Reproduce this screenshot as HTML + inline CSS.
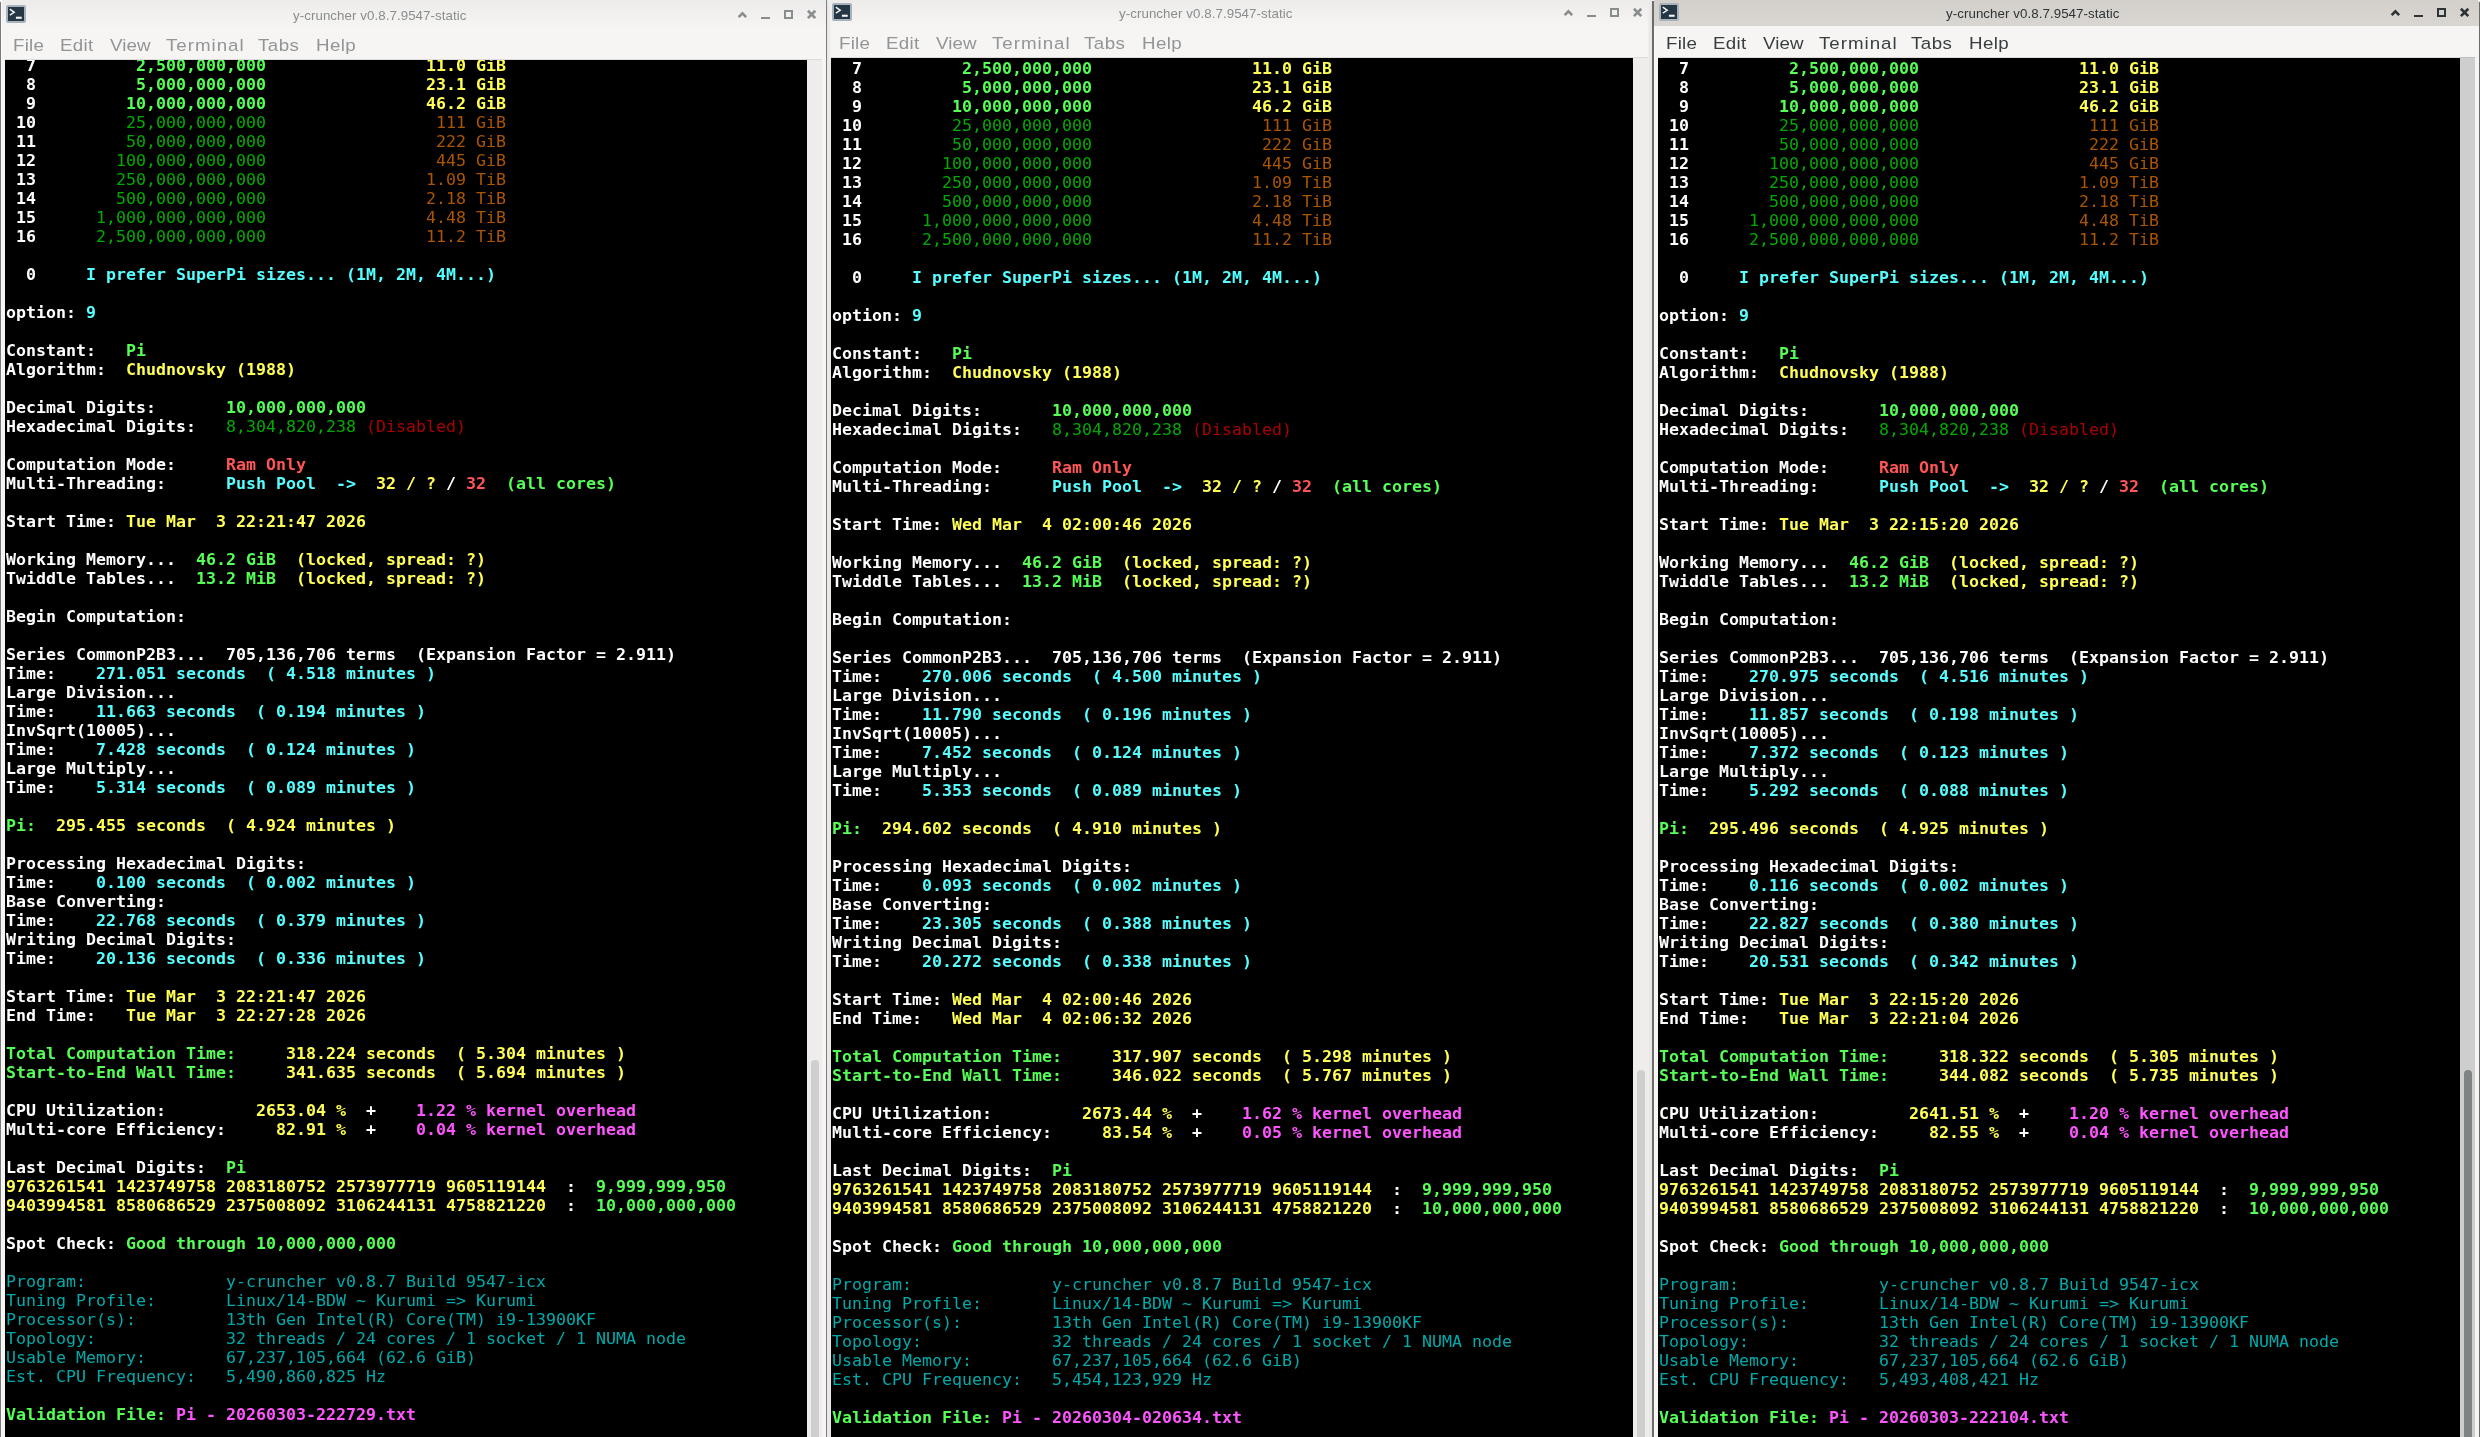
<!DOCTYPE html>
<html><head><meta charset="utf-8"><title>y-cruncher</title>
<style>
html,body{margin:0;padding:0;background:#f6f5f4;}
body{width:2480px;height:1437px;position:relative;overflow:hidden;font-family:"Liberation Sans",sans-serif;}
.win{position:absolute;top:0;height:1437px;background:#f6f5f4;overflow:hidden;}
.tb{position:absolute;left:0;right:0;top:0;}
.inact .tb{background:linear-gradient(#edecea,#f6f5f4);}
.act .tb{background:linear-gradient(#d3cfcb,#d9d6d2);}
.title{position:absolute;will-change:transform;white-space:nowrap;font-size:13.3px;line-height:16px;height:16px;}
.inact .title{color:#8a8d8e;}
.act .title{color:#2e3436;}
.ico{position:absolute;width:16px;height:14px;background:#253744;border:2px solid #a8b2bd;border-radius:2px;}
.ico svg{position:absolute;left:0;top:0;}
.btns{position:absolute;}
.btns svg{position:absolute;left:0;top:0;}
.menu{position:absolute;will-change:transform;left:0;white-space:nowrap;font-size:16.3px;line-height:20px;height:20px;width:400px;}
.menu span{position:absolute;top:0;}
.inact .menu{color:#929596;}
.act .menu{color:#383e40;}
.term{position:absolute;will-change:transform;background:#000;overflow:hidden;bottom:0;font-family:"DejaVu Sans Mono","Liberation Mono",monospace;font-size:16.61px;line-height:19px;}
.r{position:absolute;white-space:pre;height:19px;}
.tl{position:absolute;height:1px;background:#dcdbd9;}
.sb{position:absolute;bottom:0;}
.inact .sb{background:#eeedec;border-top:1px solid #dddbd9;}
.act .sb{background:#cecece;border-top:1px solid #c0bfbd;}
.thumb{position:absolute;bottom:0;border-radius:4px 4px 0 0;}
.inact .thumb{background:#cfcfcf;}
.act .thumb{background:#7f8384;}
.vl{position:absolute;top:0;bottom:0;}
.cr{position:absolute;width:2px;height:2px;background:#fff;}
.kw{color:#fff;font-weight:bold}
.kG{color:#55ff55;font-weight:bold}
.kY{color:#ffff55;font-weight:bold}
.kC{color:#55ffff;font-weight:bold}
.kR{color:#ff5555;font-weight:bold}
.kM{color:#ff55ff;font-weight:bold}
.kg{color:#00aa00}
.ky{color:#aa5500}
.kc{color:#00aaaa}
.kr{color:#aa0000}

</style></head>
<body>
<div class="win inact" id="w0" style="left:0px;width:826px">
<div class="tb" style="height:28px"></div>
<div class="ico" style="left:6px;top:5px"><svg width="16" height="14" viewBox="0 0 16 14"><path d="M1.8 2.2 L6.2 5.3 L1.8 8.1" fill="none" stroke="#eef0f2" stroke-width="1.5"/><rect x="7.9" y="9.7" width="5.8" height="2.1" fill="#f4f5f6"/></svg></div>
<div class="title" style="left:292.6px;top:7.9px;letter-spacing:0.07px">y-cruncher v0.8.7.9547-static</div>
<div class="btns" style="left:730px;top:2px;width:90px;height:26px"><svg width="90" height="26" viewBox="0 0 90 26"><g fill="none" stroke="#8a8d8e" stroke-width="2"><path d="M8.62 15.18 L12.4 11.4 L16.18 15.18" stroke-width="2.6"/><path d="M31 16 L40 16"/><rect x="55" y="9" width="7" height="7"/><path d="M77.9 8.75 L85.3 16.15 M85.3 8.75 L77.9 16.15" stroke-width="2.6"/></g></svg></div>
<div class="menu" style="top:35.4px"><span style="left:12.50px;letter-spacing:0.219px;transform-origin:0 0;transform:scaleX(1.15)">File</span><span style="left:59.50px;letter-spacing:0.300px;transform-origin:0 0;transform:scaleX(1.15)">Edit</span><span style="left:110.02px;letter-spacing:0.112px;transform-origin:0 0;transform:scaleX(1.15)">View</span><span style="left:166.36px;letter-spacing:0.847px;transform-origin:0 0;transform:scaleX(1.15)">Terminal</span><span style="left:258.36px;letter-spacing:0.413px;transform-origin:0 0;transform:scaleX(1.15)">Tabs</span><span style="left:315.60px;letter-spacing:0.370px;transform-origin:0 0;transform:scaleX(1.15)">Help</span></div>
<div class="term" style="left:5px;top:60px;width:802px"><div style="position:absolute;left:1.0px;top:0">
<div class="r" style="top:-4.5px"><span class="kw">  7</span><span class="kG">          2,500,000,000</span><span class="kY">                11.0 GiB</span></div>
<div class="r" style="top:14.5px"><span class="kw">  8</span><span class="kG">          5,000,000,000</span><span class="kY">                23.1 GiB</span></div>
<div class="r" style="top:33.5px"><span class="kw">  9</span><span class="kG">         10,000,000,000</span><span class="kY">                46.2 GiB</span></div>
<div class="r" style="top:52.5px"><span class="kw"> 10</span><span class="kg">         25,000,000,000</span><span class="ky">                 111 GiB</span></div>
<div class="r" style="top:71.5px"><span class="kw"> 11</span><span class="kg">         50,000,000,000</span><span class="ky">                 222 GiB</span></div>
<div class="r" style="top:90.5px"><span class="kw"> 12</span><span class="kg">        100,000,000,000</span><span class="ky">                 445 GiB</span></div>
<div class="r" style="top:109.5px"><span class="kw"> 13</span><span class="kg">        250,000,000,000</span><span class="ky">                1.09 TiB</span></div>
<div class="r" style="top:128.5px"><span class="kw"> 14</span><span class="kg">        500,000,000,000</span><span class="ky">                2.18 TiB</span></div>
<div class="r" style="top:147.5px"><span class="kw"> 15</span><span class="kg">      1,000,000,000,000</span><span class="ky">                4.48 TiB</span></div>
<div class="r" style="top:166.5px"><span class="kw"> 16</span><span class="kg">      2,500,000,000,000</span><span class="ky">                11.2 TiB</span></div>
<div class="r" style="top:204.5px"><span class="kw">  0     </span><span class="kC">I prefer SuperPi sizes... (1M, 2M, 4M...)</span></div>
<div class="r" style="top:242.5px"><span class="kw">option: </span><span class="kC">9</span></div>
<div class="r" style="top:280.5px"><span class="kw">Constant:   </span><span class="kG">Pi</span></div>
<div class="r" style="top:299.5px"><span class="kw">Algorithm:  </span><span class="kY">Chudnovsky (1988)</span></div>
<div class="r" style="top:337.5px"><span class="kw">Decimal Digits:       </span><span class="kG">10,000,000,000</span></div>
<div class="r" style="top:356.5px"><span class="kw">Hexadecimal Digits:   </span><span class="kg">8,304,820,238 </span><span class="kr">(Disabled)</span></div>
<div class="r" style="top:394.5px"><span class="kw">Computation Mode:     </span><span class="kR">Ram Only</span></div>
<div class="r" style="top:413.5px"><span class="kw">Multi-Threading:      </span><span class="kC">Push Pool  -&gt;  </span><span class="kY">32 / ? </span><span class="kw">/ </span><span class="kR">32  </span><span class="kG">(all cores)</span></div>
<div class="r" style="top:451.5px"><span class="kw">Start Time: </span><span class="kY">Tue Mar  3 22:21:47 2026</span></div>
<div class="r" style="top:489.5px"><span class="kw">Working Memory...  </span><span class="kG">46.2 GiB  </span><span class="kY">(locked, spread: ?)</span></div>
<div class="r" style="top:508.5px"><span class="kw">Twiddle Tables...  </span><span class="kG">13.2 MiB  </span><span class="kY">(locked, spread: ?)</span></div>
<div class="r" style="top:546.5px"><span class="kw">Begin Computation:</span></div>
<div class="r" style="top:584.5px"><span class="kw">Series CommonP2B3...  705,136,706 terms  (Expansion Factor = 2.911)</span></div>
<div class="r" style="top:603.5px"><span class="kw">Time:    </span><span class="kC">271.051 seconds  ( 4.518 minutes )</span></div>
<div class="r" style="top:622.5px"><span class="kw">Large Division...</span></div>
<div class="r" style="top:641.5px"><span class="kw">Time:    </span><span class="kC">11.663 seconds  ( 0.194 minutes )</span></div>
<div class="r" style="top:660.5px"><span class="kw">InvSqrt(10005)...</span></div>
<div class="r" style="top:679.5px"><span class="kw">Time:    </span><span class="kC">7.428 seconds  ( 0.124 minutes )</span></div>
<div class="r" style="top:698.5px"><span class="kw">Large Multiply...</span></div>
<div class="r" style="top:717.5px"><span class="kw">Time:    </span><span class="kC">5.314 seconds  ( 0.089 minutes )</span></div>
<div class="r" style="top:755.5px"><span class="kG">Pi:  </span><span class="kY">295.455 seconds  ( 4.924 minutes )</span></div>
<div class="r" style="top:793.5px"><span class="kw">Processing Hexadecimal Digits:</span></div>
<div class="r" style="top:812.5px"><span class="kw">Time:    </span><span class="kC">0.100 seconds  ( 0.002 minutes )</span></div>
<div class="r" style="top:831.5px"><span class="kw">Base Converting:</span></div>
<div class="r" style="top:850.5px"><span class="kw">Time:    </span><span class="kC">22.768 seconds  ( 0.379 minutes )</span></div>
<div class="r" style="top:869.5px"><span class="kw">Writing Decimal Digits:</span></div>
<div class="r" style="top:888.5px"><span class="kw">Time:    </span><span class="kC">20.136 seconds  ( 0.336 minutes )</span></div>
<div class="r" style="top:926.5px"><span class="kw">Start Time: </span><span class="kY">Tue Mar  3 22:21:47 2026</span></div>
<div class="r" style="top:945.5px"><span class="kw">End Time:   </span><span class="kY">Tue Mar  3 22:27:28 2026</span></div>
<div class="r" style="top:983.5px"><span class="kG">Total Computation Time:     </span><span class="kY">318.224 seconds  ( 5.304 minutes )</span></div>
<div class="r" style="top:1002.5px"><span class="kG">Start-to-End Wall Time:     </span><span class="kY">341.635 seconds  ( 5.694 minutes )</span></div>
<div class="r" style="top:1040.5px"><span class="kw">CPU Utilization:         </span><span class="kY">2653.04 %  </span><span class="kw">+    </span><span class="kM">1.22 % kernel overhead</span></div>
<div class="r" style="top:1059.5px"><span class="kw">Multi-core Efficiency:   </span><span class="kY">  82.91 %  </span><span class="kw">+    </span><span class="kM">0.04 % kernel overhead</span></div>
<div class="r" style="top:1097.5px"><span class="kw">Last Decimal Digits:  </span><span class="kG">Pi</span></div>
<div class="r" style="top:1116.5px"><span class="kY">9763261541 1423749758 2083180752 2573977719 9605119144  </span><span class="kw">:  </span><span class="kG">9,999,999,950</span></div>
<div class="r" style="top:1135.5px"><span class="kY">9403994581 8580686529 2375008092 3106244131 4758821220  </span><span class="kw">:  </span><span class="kG">10,000,000,000</span></div>
<div class="r" style="top:1173.5px"><span class="kw">Spot Check: </span><span class="kG">Good through 10,000,000,000</span></div>
<div class="r" style="top:1211.5px"><span class="kc">Program:              y-cruncher v0.8.7 Build 9547-icx</span></div>
<div class="r" style="top:1230.5px"><span class="kc">Tuning Profile:       Linux/14-BDW ~ Kurumi =&gt; Kurumi</span></div>
<div class="r" style="top:1249.5px"><span class="kc">Processor(s):         13th Gen Intel(R) Core(TM) i9-13900KF</span></div>
<div class="r" style="top:1268.5px"><span class="kc">Topology:             32 threads / 24 cores / 1 socket / 1 NUMA node</span></div>
<div class="r" style="top:1287.5px"><span class="kc">Usable Memory:        67,237,105,664 (62.6 GiB)</span></div>
<div class="r" style="top:1306.5px"><span class="kc">Est. CPU Frequency:   5,490,860,825 Hz</span></div>
<div class="r" style="top:1344.5px"><span class="kG">Validation File: </span><span class="kM">Pi - 20260303-222729.txt</span></div>
</div></div>
<div class="tl" style="left:5px;top:59px;width:802px"></div>
<div class="sb" style="left:807px;top:59px;width:15px"></div>
<div class="thumb" style="left:811px;top:1060px;width:8px"></div>
</div>

<div class="win inact" id="w1" style="left:826px;width:827px">
<div class="tb" style="height:26px"></div>
<div class="ico" style="left:6px;top:3px"><svg width="16" height="14" viewBox="0 0 16 14"><path d="M1.8 2.2 L6.2 5.3 L1.8 8.1" fill="none" stroke="#eef0f2" stroke-width="1.5"/><rect x="7.9" y="9.7" width="5.8" height="2.1" fill="#f4f5f6"/></svg></div>
<div class="title" style="left:293.2px;top:5.9px;letter-spacing:0.07px">y-cruncher v0.8.7.9547-static</div>
<div class="btns" style="left:730px;top:0px;width:90px;height:26px"><svg width="90" height="26" viewBox="0 0 90 26"><g fill="none" stroke="#8a8d8e" stroke-width="2"><path d="M8.62 15.18 L12.4 11.4 L16.18 15.18" stroke-width="2.6"/><path d="M31 16 L40 16"/><rect x="55" y="9" width="7" height="7"/><path d="M77.9 8.75 L85.3 16.15 M85.3 8.75 L77.9 16.15" stroke-width="2.6"/></g></svg></div>
<div class="menu" style="top:33.4px"><span style="left:12.50px;letter-spacing:0.219px;transform-origin:0 0;transform:scaleX(1.15)">File</span><span style="left:59.50px;letter-spacing:0.300px;transform-origin:0 0;transform:scaleX(1.15)">Edit</span><span style="left:110.02px;letter-spacing:0.112px;transform-origin:0 0;transform:scaleX(1.15)">View</span><span style="left:166.36px;letter-spacing:0.847px;transform-origin:0 0;transform:scaleX(1.15)">Terminal</span><span style="left:258.36px;letter-spacing:0.413px;transform-origin:0 0;transform:scaleX(1.15)">Tabs</span><span style="left:315.60px;letter-spacing:0.370px;transform-origin:0 0;transform:scaleX(1.15)">Help</span></div>
<div class="term" style="left:5px;top:58px;width:802px"><div style="position:absolute;left:1.0px;top:0">
<div class="r" style="top:0.5px"><span class="kw">  7</span><span class="kG">          2,500,000,000</span><span class="kY">                11.0 GiB</span></div>
<div class="r" style="top:19.5px"><span class="kw">  8</span><span class="kG">          5,000,000,000</span><span class="kY">                23.1 GiB</span></div>
<div class="r" style="top:38.5px"><span class="kw">  9</span><span class="kG">         10,000,000,000</span><span class="kY">                46.2 GiB</span></div>
<div class="r" style="top:57.5px"><span class="kw"> 10</span><span class="kg">         25,000,000,000</span><span class="ky">                 111 GiB</span></div>
<div class="r" style="top:76.5px"><span class="kw"> 11</span><span class="kg">         50,000,000,000</span><span class="ky">                 222 GiB</span></div>
<div class="r" style="top:95.5px"><span class="kw"> 12</span><span class="kg">        100,000,000,000</span><span class="ky">                 445 GiB</span></div>
<div class="r" style="top:114.5px"><span class="kw"> 13</span><span class="kg">        250,000,000,000</span><span class="ky">                1.09 TiB</span></div>
<div class="r" style="top:133.5px"><span class="kw"> 14</span><span class="kg">        500,000,000,000</span><span class="ky">                2.18 TiB</span></div>
<div class="r" style="top:152.5px"><span class="kw"> 15</span><span class="kg">      1,000,000,000,000</span><span class="ky">                4.48 TiB</span></div>
<div class="r" style="top:171.5px"><span class="kw"> 16</span><span class="kg">      2,500,000,000,000</span><span class="ky">                11.2 TiB</span></div>
<div class="r" style="top:209.5px"><span class="kw">  0     </span><span class="kC">I prefer SuperPi sizes... (1M, 2M, 4M...)</span></div>
<div class="r" style="top:247.5px"><span class="kw">option: </span><span class="kC">9</span></div>
<div class="r" style="top:285.5px"><span class="kw">Constant:   </span><span class="kG">Pi</span></div>
<div class="r" style="top:304.5px"><span class="kw">Algorithm:  </span><span class="kY">Chudnovsky (1988)</span></div>
<div class="r" style="top:342.5px"><span class="kw">Decimal Digits:       </span><span class="kG">10,000,000,000</span></div>
<div class="r" style="top:361.5px"><span class="kw">Hexadecimal Digits:   </span><span class="kg">8,304,820,238 </span><span class="kr">(Disabled)</span></div>
<div class="r" style="top:399.5px"><span class="kw">Computation Mode:     </span><span class="kR">Ram Only</span></div>
<div class="r" style="top:418.5px"><span class="kw">Multi-Threading:      </span><span class="kC">Push Pool  -&gt;  </span><span class="kY">32 / ? </span><span class="kw">/ </span><span class="kR">32  </span><span class="kG">(all cores)</span></div>
<div class="r" style="top:456.5px"><span class="kw">Start Time: </span><span class="kY">Wed Mar  4 02:00:46 2026</span></div>
<div class="r" style="top:494.5px"><span class="kw">Working Memory...  </span><span class="kG">46.2 GiB  </span><span class="kY">(locked, spread: ?)</span></div>
<div class="r" style="top:513.5px"><span class="kw">Twiddle Tables...  </span><span class="kG">13.2 MiB  </span><span class="kY">(locked, spread: ?)</span></div>
<div class="r" style="top:551.5px"><span class="kw">Begin Computation:</span></div>
<div class="r" style="top:589.5px"><span class="kw">Series CommonP2B3...  705,136,706 terms  (Expansion Factor = 2.911)</span></div>
<div class="r" style="top:608.5px"><span class="kw">Time:    </span><span class="kC">270.006 seconds  ( 4.500 minutes )</span></div>
<div class="r" style="top:627.5px"><span class="kw">Large Division...</span></div>
<div class="r" style="top:646.5px"><span class="kw">Time:    </span><span class="kC">11.790 seconds  ( 0.196 minutes )</span></div>
<div class="r" style="top:665.5px"><span class="kw">InvSqrt(10005)...</span></div>
<div class="r" style="top:684.5px"><span class="kw">Time:    </span><span class="kC">7.452 seconds  ( 0.124 minutes )</span></div>
<div class="r" style="top:703.5px"><span class="kw">Large Multiply...</span></div>
<div class="r" style="top:722.5px"><span class="kw">Time:    </span><span class="kC">5.353 seconds  ( 0.089 minutes )</span></div>
<div class="r" style="top:760.5px"><span class="kG">Pi:  </span><span class="kY">294.602 seconds  ( 4.910 minutes )</span></div>
<div class="r" style="top:798.5px"><span class="kw">Processing Hexadecimal Digits:</span></div>
<div class="r" style="top:817.5px"><span class="kw">Time:    </span><span class="kC">0.093 seconds  ( 0.002 minutes )</span></div>
<div class="r" style="top:836.5px"><span class="kw">Base Converting:</span></div>
<div class="r" style="top:855.5px"><span class="kw">Time:    </span><span class="kC">23.305 seconds  ( 0.388 minutes )</span></div>
<div class="r" style="top:874.5px"><span class="kw">Writing Decimal Digits:</span></div>
<div class="r" style="top:893.5px"><span class="kw">Time:    </span><span class="kC">20.272 seconds  ( 0.338 minutes )</span></div>
<div class="r" style="top:931.5px"><span class="kw">Start Time: </span><span class="kY">Wed Mar  4 02:00:46 2026</span></div>
<div class="r" style="top:950.5px"><span class="kw">End Time:   </span><span class="kY">Wed Mar  4 02:06:32 2026</span></div>
<div class="r" style="top:988.5px"><span class="kG">Total Computation Time:     </span><span class="kY">317.907 seconds  ( 5.298 minutes )</span></div>
<div class="r" style="top:1007.5px"><span class="kG">Start-to-End Wall Time:     </span><span class="kY">346.022 seconds  ( 5.767 minutes )</span></div>
<div class="r" style="top:1045.5px"><span class="kw">CPU Utilization:         </span><span class="kY">2673.44 %  </span><span class="kw">+    </span><span class="kM">1.62 % kernel overhead</span></div>
<div class="r" style="top:1064.5px"><span class="kw">Multi-core Efficiency:   </span><span class="kY">  83.54 %  </span><span class="kw">+    </span><span class="kM">0.05 % kernel overhead</span></div>
<div class="r" style="top:1102.5px"><span class="kw">Last Decimal Digits:  </span><span class="kG">Pi</span></div>
<div class="r" style="top:1121.5px"><span class="kY">9763261541 1423749758 2083180752 2573977719 9605119144  </span><span class="kw">:  </span><span class="kG">9,999,999,950</span></div>
<div class="r" style="top:1140.5px"><span class="kY">9403994581 8580686529 2375008092 3106244131 4758821220  </span><span class="kw">:  </span><span class="kG">10,000,000,000</span></div>
<div class="r" style="top:1178.5px"><span class="kw">Spot Check: </span><span class="kG">Good through 10,000,000,000</span></div>
<div class="r" style="top:1216.5px"><span class="kc">Program:              y-cruncher v0.8.7 Build 9547-icx</span></div>
<div class="r" style="top:1235.5px"><span class="kc">Tuning Profile:       Linux/14-BDW ~ Kurumi =&gt; Kurumi</span></div>
<div class="r" style="top:1254.5px"><span class="kc">Processor(s):         13th Gen Intel(R) Core(TM) i9-13900KF</span></div>
<div class="r" style="top:1273.5px"><span class="kc">Topology:             32 threads / 24 cores / 1 socket / 1 NUMA node</span></div>
<div class="r" style="top:1292.5px"><span class="kc">Usable Memory:        67,237,105,664 (62.6 GiB)</span></div>
<div class="r" style="top:1311.5px"><span class="kc">Est. CPU Frequency:   5,454,123,929 Hz</span></div>
<div class="r" style="top:1349.5px"><span class="kG">Validation File: </span><span class="kM">Pi - 20260304-020634.txt</span></div>
</div></div>
<div class="tl" style="left:5px;top:57px;width:802px"></div>
<div class="sb" style="left:807px;top:57px;width:15px"></div>
<div class="thumb" style="left:811px;top:1070px;width:8px"></div>
</div>

<div class="win act" id="w2" style="left:1653px;width:827px">
<div class="tb" style="height:26px"></div>
<div class="ico" style="left:6px;top:3px"><svg width="16" height="14" viewBox="0 0 16 14"><path d="M1.8 2.2 L6.2 5.3 L1.8 8.1" fill="none" stroke="#eef0f2" stroke-width="1.5"/><rect x="7.9" y="9.7" width="5.8" height="2.1" fill="#f4f5f6"/></svg></div>
<div class="title" style="left:293.2px;top:5.9px;letter-spacing:0.07px">y-cruncher v0.8.7.9547-static</div>
<div class="btns" style="left:730px;top:0px;width:90px;height:26px"><svg width="90" height="26" viewBox="0 0 90 26"><g fill="none" stroke="#2e3436" stroke-width="2"><path d="M8.62 15.18 L12.4 11.4 L16.18 15.18" stroke-width="2.6"/><path d="M31 16 L40 16"/><rect x="55" y="9" width="7" height="7"/><path d="M77.9 8.75 L85.3 16.15 M85.3 8.75 L77.9 16.15" stroke-width="2.6"/></g></svg></div>
<div class="menu" style="top:33.4px"><span style="left:12.50px;letter-spacing:0.219px;transform-origin:0 0;transform:scaleX(1.15)">File</span><span style="left:59.50px;letter-spacing:0.300px;transform-origin:0 0;transform:scaleX(1.15)">Edit</span><span style="left:110.02px;letter-spacing:0.112px;transform-origin:0 0;transform:scaleX(1.15)">View</span><span style="left:166.36px;letter-spacing:0.847px;transform-origin:0 0;transform:scaleX(1.15)">Terminal</span><span style="left:258.36px;letter-spacing:0.413px;transform-origin:0 0;transform:scaleX(1.15)">Tabs</span><span style="left:315.60px;letter-spacing:0.370px;transform-origin:0 0;transform:scaleX(1.15)">Help</span></div>
<div class="term" style="left:5px;top:58px;width:802px"><div style="position:absolute;left:1.0px;top:0">
<div class="r" style="top:0.5px"><span class="kw">  7</span><span class="kG">          2,500,000,000</span><span class="kY">                11.0 GiB</span></div>
<div class="r" style="top:19.5px"><span class="kw">  8</span><span class="kG">          5,000,000,000</span><span class="kY">                23.1 GiB</span></div>
<div class="r" style="top:38.5px"><span class="kw">  9</span><span class="kG">         10,000,000,000</span><span class="kY">                46.2 GiB</span></div>
<div class="r" style="top:57.5px"><span class="kw"> 10</span><span class="kg">         25,000,000,000</span><span class="ky">                 111 GiB</span></div>
<div class="r" style="top:76.5px"><span class="kw"> 11</span><span class="kg">         50,000,000,000</span><span class="ky">                 222 GiB</span></div>
<div class="r" style="top:95.5px"><span class="kw"> 12</span><span class="kg">        100,000,000,000</span><span class="ky">                 445 GiB</span></div>
<div class="r" style="top:114.5px"><span class="kw"> 13</span><span class="kg">        250,000,000,000</span><span class="ky">                1.09 TiB</span></div>
<div class="r" style="top:133.5px"><span class="kw"> 14</span><span class="kg">        500,000,000,000</span><span class="ky">                2.18 TiB</span></div>
<div class="r" style="top:152.5px"><span class="kw"> 15</span><span class="kg">      1,000,000,000,000</span><span class="ky">                4.48 TiB</span></div>
<div class="r" style="top:171.5px"><span class="kw"> 16</span><span class="kg">      2,500,000,000,000</span><span class="ky">                11.2 TiB</span></div>
<div class="r" style="top:209.5px"><span class="kw">  0     </span><span class="kC">I prefer SuperPi sizes... (1M, 2M, 4M...)</span></div>
<div class="r" style="top:247.5px"><span class="kw">option: </span><span class="kC">9</span></div>
<div class="r" style="top:285.5px"><span class="kw">Constant:   </span><span class="kG">Pi</span></div>
<div class="r" style="top:304.5px"><span class="kw">Algorithm:  </span><span class="kY">Chudnovsky (1988)</span></div>
<div class="r" style="top:342.5px"><span class="kw">Decimal Digits:       </span><span class="kG">10,000,000,000</span></div>
<div class="r" style="top:361.5px"><span class="kw">Hexadecimal Digits:   </span><span class="kg">8,304,820,238 </span><span class="kr">(Disabled)</span></div>
<div class="r" style="top:399.5px"><span class="kw">Computation Mode:     </span><span class="kR">Ram Only</span></div>
<div class="r" style="top:418.5px"><span class="kw">Multi-Threading:      </span><span class="kC">Push Pool  -&gt;  </span><span class="kY">32 / ? </span><span class="kw">/ </span><span class="kR">32  </span><span class="kG">(all cores)</span></div>
<div class="r" style="top:456.5px"><span class="kw">Start Time: </span><span class="kY">Tue Mar  3 22:15:20 2026</span></div>
<div class="r" style="top:494.5px"><span class="kw">Working Memory...  </span><span class="kG">46.2 GiB  </span><span class="kY">(locked, spread: ?)</span></div>
<div class="r" style="top:513.5px"><span class="kw">Twiddle Tables...  </span><span class="kG">13.2 MiB  </span><span class="kY">(locked, spread: ?)</span></div>
<div class="r" style="top:551.5px"><span class="kw">Begin Computation:</span></div>
<div class="r" style="top:589.5px"><span class="kw">Series CommonP2B3...  705,136,706 terms  (Expansion Factor = 2.911)</span></div>
<div class="r" style="top:608.5px"><span class="kw">Time:    </span><span class="kC">270.975 seconds  ( 4.516 minutes )</span></div>
<div class="r" style="top:627.5px"><span class="kw">Large Division...</span></div>
<div class="r" style="top:646.5px"><span class="kw">Time:    </span><span class="kC">11.857 seconds  ( 0.198 minutes )</span></div>
<div class="r" style="top:665.5px"><span class="kw">InvSqrt(10005)...</span></div>
<div class="r" style="top:684.5px"><span class="kw">Time:    </span><span class="kC">7.372 seconds  ( 0.123 minutes )</span></div>
<div class="r" style="top:703.5px"><span class="kw">Large Multiply...</span></div>
<div class="r" style="top:722.5px"><span class="kw">Time:    </span><span class="kC">5.292 seconds  ( 0.088 minutes )</span></div>
<div class="r" style="top:760.5px"><span class="kG">Pi:  </span><span class="kY">295.496 seconds  ( 4.925 minutes )</span></div>
<div class="r" style="top:798.5px"><span class="kw">Processing Hexadecimal Digits:</span></div>
<div class="r" style="top:817.5px"><span class="kw">Time:    </span><span class="kC">0.116 seconds  ( 0.002 minutes )</span></div>
<div class="r" style="top:836.5px"><span class="kw">Base Converting:</span></div>
<div class="r" style="top:855.5px"><span class="kw">Time:    </span><span class="kC">22.827 seconds  ( 0.380 minutes )</span></div>
<div class="r" style="top:874.5px"><span class="kw">Writing Decimal Digits:</span></div>
<div class="r" style="top:893.5px"><span class="kw">Time:    </span><span class="kC">20.531 seconds  ( 0.342 minutes )</span></div>
<div class="r" style="top:931.5px"><span class="kw">Start Time: </span><span class="kY">Tue Mar  3 22:15:20 2026</span></div>
<div class="r" style="top:950.5px"><span class="kw">End Time:   </span><span class="kY">Tue Mar  3 22:21:04 2026</span></div>
<div class="r" style="top:988.5px"><span class="kG">Total Computation Time:     </span><span class="kY">318.322 seconds  ( 5.305 minutes )</span></div>
<div class="r" style="top:1007.5px"><span class="kG">Start-to-End Wall Time:     </span><span class="kY">344.082 seconds  ( 5.735 minutes )</span></div>
<div class="r" style="top:1045.5px"><span class="kw">CPU Utilization:         </span><span class="kY">2641.51 %  </span><span class="kw">+    </span><span class="kM">1.20 % kernel overhead</span></div>
<div class="r" style="top:1064.5px"><span class="kw">Multi-core Efficiency:   </span><span class="kY">  82.55 %  </span><span class="kw">+    </span><span class="kM">0.04 % kernel overhead</span></div>
<div class="r" style="top:1102.5px"><span class="kw">Last Decimal Digits:  </span><span class="kG">Pi</span></div>
<div class="r" style="top:1121.5px"><span class="kY">9763261541 1423749758 2083180752 2573977719 9605119144  </span><span class="kw">:  </span><span class="kG">9,999,999,950</span></div>
<div class="r" style="top:1140.5px"><span class="kY">9403994581 8580686529 2375008092 3106244131 4758821220  </span><span class="kw">:  </span><span class="kG">10,000,000,000</span></div>
<div class="r" style="top:1178.5px"><span class="kw">Spot Check: </span><span class="kG">Good through 10,000,000,000</span></div>
<div class="r" style="top:1216.5px"><span class="kc">Program:              y-cruncher v0.8.7 Build 9547-icx</span></div>
<div class="r" style="top:1235.5px"><span class="kc">Tuning Profile:       Linux/14-BDW ~ Kurumi =&gt; Kurumi</span></div>
<div class="r" style="top:1254.5px"><span class="kc">Processor(s):         13th Gen Intel(R) Core(TM) i9-13900KF</span></div>
<div class="r" style="top:1273.5px"><span class="kc">Topology:             32 threads / 24 cores / 1 socket / 1 NUMA node</span></div>
<div class="r" style="top:1292.5px"><span class="kc">Usable Memory:        67,237,105,664 (62.6 GiB)</span></div>
<div class="r" style="top:1311.5px"><span class="kc">Est. CPU Frequency:   5,493,408,421 Hz</span></div>
<div class="r" style="top:1349.5px"><span class="kG">Validation File: </span><span class="kM">Pi - 20260303-222104.txt</span></div>
</div></div>
<div class="tl" style="left:5px;top:57px;width:802px"></div>
<div class="sb" style="left:807px;top:57px;width:15px"></div>
<div class="thumb" style="left:811px;top:1070px;width:8px"></div>
</div>

<div class="vl" style="left:0;width:1px;background:#7a7a78"></div>
<div class="vl" style="left:1px;width:1px;background:#fbfaf9"></div>
<div class="vl" style="left:826px;width:1px;background:#7d7d7d"></div>
<div class="vl" style="left:827px;width:4px;background:linear-gradient(90deg,#e6e5e4,#f3f2f1);height:58px"></div>
<div class="vl" style="left:827px;width:4px;background:#e9e8e7;top:58px"></div>
<div class="vl" style="left:1648px;width:4px;background:linear-gradient(90deg,#f0efee,#e4e3e2)"></div>
<div class="vl" style="left:1652px;width:2px;background:#6b6b69"></div>
<div class="vl" style="left:1654px;width:1px;background:#fbfaf9;top:26px"></div>
<div class="vl" style="left:2479px;width:1px;background:#6b6b69"></div>
<div class="cr" style="left:0;top:0;border-radius:0 0 3px 0"></div>
<div class="cr" style="left:2478px;top:0;border-radius:0 0 0 3px"></div>
<div class="cr" style="left:826px;top:0;width:1px;height:1px;background:#3daee9"></div>
<div class="cr" style="left:1652px;top:0;width:2px;height:1px;background:#f4f4f4"></div>
</body></html>
